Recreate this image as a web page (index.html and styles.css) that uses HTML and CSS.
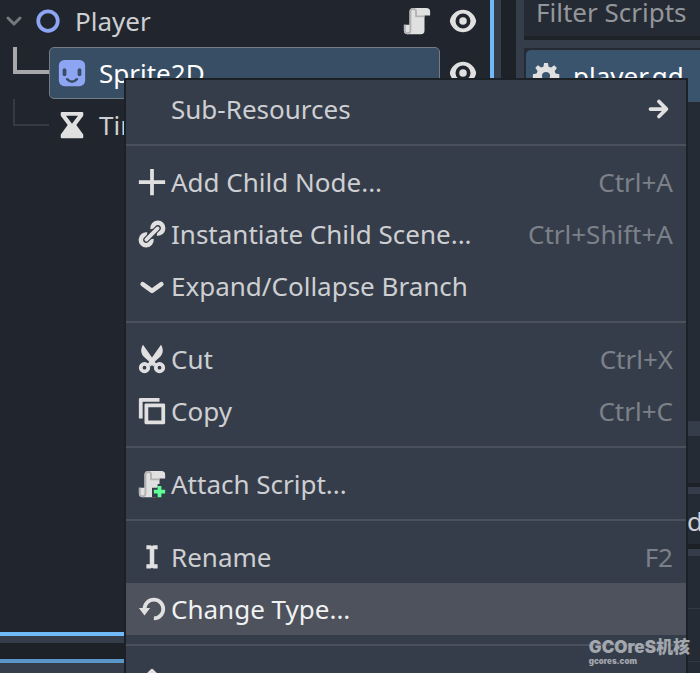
FILE: index.html
```html
<!DOCTYPE html>
<html lang="en">
<head>
<meta charset="utf-8">
<title>Scene tree</title>
<link rel="stylesheet" href="styles.css">
</head>
<body>
<svg class="defs" aria-hidden="true">
  <symbol id="eye" viewBox="0 0 16 16"><path fill-rule="evenodd" d="M8 2C4.900 2 2.100 4.100 1.100 7.300a2.500 2.500 0 0 0 0 1.400C2.100 11.900 4.900 14 8 14s5.900-2.100 6.900-5.300a2.500 2.500 0 0 0 0-1.400C13.900 4.100 11.100 2 8 2zm0 2a4 4 0 1 1 0 8 4 4 0 0 1 0-8zm0 2a2 2 0 1 0 0 4 2 2 0 0 0 0-4z"/></symbol>
  <symbol id="script" viewBox="0 0 16 16"><path d="M6 1a2 2 0 0 0-2 2v7H1v3a2 2 0 0 0 2 2h7a2 2 0 0 0 2-2V5h3V3a2 2 0 0 0-2-2z"/><path fill="#b2b2b2" d="M6 1a2 2 0 0 0-2 2v10a1 1 0 0 1-2 0v-3H1v3a2 2 0 0 0 4 0V3a1 1 0 0 1 2 0v3h5V5H8V3a2 2 0 0 0-2-2z"/></symbol>
</svg>
<div class="editor">
  <main class="left">
    <section class="dock">
      <ul class="tree">
        <li class="row root">
          <svg class="fold" viewBox="0 0 16 16"><path d="M2 5l6 6 6-6"/></svg>
          <svg class="icon" viewBox="0 0 16 16"><circle class="ring" cx="8" cy="8" r="5.200"/></svg>
          <span class="name">Player</span>
          <svg class="icon"><use href="#script"/></svg>
          <svg class="icon"><use href="#eye"/></svg>
        </li>
        <li class="row child">
          <span class="branch strong"></span>
          <div class="cell selected">
            <svg class="icon" viewBox="0 0 16 16"><rect x="1" y="1" width="14" height="14" rx="3" fill="#8da5f3"/><rect x="3" y="5.500" width="2" height="4.200" rx="1" fill="#384e64"/><rect x="11" y="5.500" width="2" height="4.200" rx="1" fill="#384e64"/><path d="M5.400 11.300q2.600 2.800 5.200 0" fill="none" stroke="#384e64" stroke-width="1.300" stroke-linecap="round"/></svg>
            <span class="name">Sprite2D</span>
          </div>
          <svg class="icon"><use href="#eye"/></svg>
        </li>
        <li class="row child">
          <span class="branch"></span>
          <div class="cell">
            <svg class="icon" viewBox="0 0 16 16"><path fill-rule="evenodd" d="M2.500 1h11a.5.5 0 0 1 .5.500V3l-3.700 5L14 13v1.500a.5.5 0 0 1-.5.500h-11a.5.5 0 0 1-.5-.5V13l3.700-5L2 3V1.500a.5.5 0 0 1 .5-.5zM4.800 3L8 7.300 11.200 3z"/></svg>
            <span class="name">Timer</span>
          </div>
        </li>
      </ul>
    </section>
    <section class="lower"></section>
  </main>
  <aside class="scripts">
    <input class="field" type="text" placeholder="Filter Scripts" aria-label="Filter Scripts">
    <div class="list">
      <div class="entry">
        <svg class="icon" viewBox="0 0 16 16"><path fill-rule="evenodd" d="M7 1h2l.4 2 1.300.5 1.700-1.200 1.400 1.400-1.200 1.700.5 1.300 2 .4v2l-2 .4-.5 1.300 1.200 1.700-1.400 1.400-1.700-1.200-1.300.5-.4 2H7l-.4-2-1.300-.5-1.700 1.200-1.400-1.400 1.200-1.700L2.900 9.500 1 9V7l2-.4.500-1.300-1.200-1.700 1.400-1.400 1.700 1.200L6.600 3zM8 5.800a2.200 2.200 0 1 0 0 4.400 2.200 2.200 0 0 0 0-4.400z"/></svg>
        <span>player.gd</span>
      </div>
    </div>
    <div class="panel"></div>
    <div class="current">d</div>
    <div class="methods"><div></div><div></div></div>
  </aside>
</div>

<nav class="menu">
  <button class="item"><span class="icon"></span><span class="label">Sub-Resources</span>
    <svg class="icon arrow" viewBox="0 0 16 16"><path d="M4 8h8M8.500 4l4 4-4 4"/></svg></button>
  <hr>
  <button class="item"><svg class="icon" viewBox="0 0 16 16"><path d="M7 1v6H1v2h6v6h2V9h6V7H9V1z"/></svg><span class="label">Add Child Node...</span><kbd>Ctrl+A</kbd></button>
  <button class="item"><svg class="icon" viewBox="0 0 16 16"><g class="line heavy"><path d="M8.300 5.300A2.850 2.850 0 1 1 10.700 7.700"/><path d="M7.700 10.700A2.850 2.850 0 1 1 5.300 8.300"/></g><path class="casing" d="M5 11l6-6"/><path class="line round" d="M5 11l6-6"/></svg><span class="label">Instantiate Child Scene...</span><kbd>Ctrl+Shift+A</kbd></button>
  <button class="item"><svg class="icon" viewBox="0 0 16 16"><path class="line round heavy" d="M3 7l5 3.600L13 7"/></svg><span class="label">Expand/Collapse Branch</span></button>
  <hr>
  <button class="item"><svg class="icon" viewBox="0 0 16 16"><path d="M3.200.4C1.800 2.700 2 4.800 3.500 6.700L6.600 9.500 5.500 10.700l2 1.300L8 11l.5 1 2-1.300-1.100-1.200 3.100-2.800c1.500-1.900 1.700-4 .3-6.300L8 7.200z"/><circle class="line" cx="4" cy="12.600" r="2"/><circle class="line" cx="12" cy="12.600" r="2"/></svg><span class="label">Cut</span><kbd>Ctrl+X</kbd></button>
  <button class="item"><svg class="icon" viewBox="0 0 16 16"><path fill-rule="evenodd" d="M1.500 1H12v2H3v9H1V1.500zM4.500 4h10l.5.500v10l-.5.500h-10l-.5-.5v-10zM6 6v7h7V6z"/></svg><span class="label">Copy</span><kbd>Ctrl+C</kbd></button>
  <hr>
  <button class="item"><svg class="icon" viewBox="0 0 16 16"><use href="#script"/><path class="gap" d="M11 8h4v2h1v5h-1v1h-4v-1H8v-5h3z"/><path fill="#5fff97" d="M11 9h2v2h2v2h-2v2h-2v-2H9v-2h2z"/></svg><span class="label">Attach Script...</span></button>
  <hr>
  <button class="item"><svg class="icon" viewBox="0 0 16 16"><path d="M5 1.700h2.300l.7.400.7-.4H11v2.200H9.200v8H11v2.200H8.700l-.7-.4-.7.400H5v-2.200h1.800v-8H5z"/></svg><span class="label">Rename</span><kbd>F2</kbd></button>
  <button class="item hover"><svg class="icon" viewBox="0 0 16 16"><path class="line" d="M4 8a5 5 0 1 1 5 5"/><path d="M1 7.500h6L4 11.500z"/></svg><span class="label">Change Type...</span></button>
  <hr>
  <button class="item" aria-label="Move Up"><svg class="icon" viewBox="0 0 16 16"><path class="line round" d="M8 14V2M3.500 6.500L8 2l4.500 4.500"/></svg></button>
</nav>
<div class="watermark"><span class="brand">GCOreS机核</span><span class="site">gcores.com</span></div>
</body>
</html>
```

FILE: styles.css
```css
* { box-sizing: border-box; }

body {
  margin: 0;
  height: 100vh;
  overflow: hidden;
  position: relative;
  background: #1d2229;
  color: #cdcfd2;
  font: 26px/36px "Noto Sans", sans-serif;
}

.defs { display: none; }

.icon {
  flex: none;
  width: 30px;
  height: 30px;
  fill: #e0e0e0;
}

.line, .arrow, .fold {
  fill: none;
  stroke: #e0e0e0;
  stroke-width: 2;
}

.round, .arrow, .fold { stroke-linecap: round; stroke-linejoin: round; }

.heavy { stroke-width: 2.4; }

.casing { stroke: #363d4a; stroke-width: 3.2; }

.editor {
  display: grid;
  grid-template-columns: 501px 1fr;
  gap: 15px;
  height: 100%;
}

.left {
  display: grid;
  grid-template-rows: 1fr 14px;
  gap: 16px;
}

.dock {
  padding: 0 7px 7px 0;
  background: #363d4a;
}

.tree {
  height: 100%;
  margin: 0;
  padding: 0;
  overflow: hidden;
  list-style: none;
  background: #21262e;
  border: solid #70bafa;
  border-width: 0 4px 4px 0;
}

.lower {
  background: #363d4a;
  border-top: 4px solid #5b96c9;
}

.row {
  display: flex;
  align-items: center;
  height: 52px;
  padding-right: 12px;
}

.root { margin-top: -5px; padding-left: 6px; }
.root .icon + .icon { margin-left: 16px; }

.name { flex: 1; margin-left: 12px; }

.fold {
  width: 16px;
  height: 16px;
  margin-right: 11px;
  stroke: #75797f;
  stroke-width: 3;
}

.ring { fill: none; stroke: #8da5f3; stroke-width: 2; }

.child { padding-left: 13px; }

.branch {
  align-self: flex-start;
  width: 36px;
  height: 27px;
  border: solid #363b43;
  border-width: 0 0 2px 2px;
}

.strong { border-color: #a6a8ab; border-width: 0 0 4px 4px; }

.cell {
  flex: 1;
  display: flex;
  align-items: center;
  height: 52px;
  margin-right: 8px;
  padding-left: 7px;
  border: 1px solid transparent;
  border-radius: 5px;
}

.selected {
  background: #384e64;
  border-color: #737b85;
  color: #fff;
}

.scripts {
  display: flex;
  flex-direction: column;
  padding-left: 8px;
  background: #363d4a;
}

.field {
  height: 40px;
  width: 100%;
  padding: 0 12px 12px;
  border: 0;
  border-bottom: 4px solid #1e2327;
  background: #252b34;
  color: #cdcfd2;
  font: inherit;
}

.field::placeholder { color: #93969b; opacity: 1; }

.list {
  flex: 1;
  margin-top: 8px;
  padding: 2px 0 0 2px;
  background: #252b34;
}

.entry {
  display: flex;
  align-items: center;
  gap: 12px;
  height: 52px;
  padding-left: 5px;
  border-radius: 5px 0 0 0;
  background: #3b546e;
  color: #fff;
}

.panel {
  height: 51px;
  margin: 15px 0 7px;
  background: #252b34;
  border-bottom: 4px solid #1c2128;
}

.current {
  height: 55px;
  padding: 9px 0 0 163px;
  background: #252b34;
  border-bottom: 5px solid #1c2128;
}

.methods {
  height: 117px;
  margin-top: 7px;
  background: #252b34;
}

.methods div { height: 53px; border-bottom: 1px solid #343a43; }

.menu {
  position: absolute;
  inset: 78px 12px 0 124px;
  overflow: hidden;
  padding-top: 3px;
  border: solid #1c2128;
  border-width: 2px 2px 0 2px;
  background: #363d4a;
}

.item {
  display: flex;
  align-items: center;
  gap: 4px;
  width: 100%;
  height: 52px;
  padding: 0 13px 0 11px;
  border: 0;
  background: none;
  color: #cdcfd2;
  font: inherit;
  text-align: left;
}

.label { flex: 1; }
.hover { background: #4d525d; color: #f0f1f2; }

kbd { color: #7c8189; font: inherit; }

.menu hr {
  height: 2px;
  margin: 9px 0 10px;
  border: 0;
  background: #4a505c;
}

.gap { fill: #363d4a; }

.watermark {
  position: absolute;
  right: 10px;
  bottom: 8px;
  display: grid;
  gap: 1px;
  color: #a3a7ae;
  font-family: Inter, "Noto Sans CJK SC", sans-serif;
  font-weight: 900;
}

.brand { font-size: 17px; line-height: 18px; }
.site { font-size: 8px; line-height: 8px; }
```
